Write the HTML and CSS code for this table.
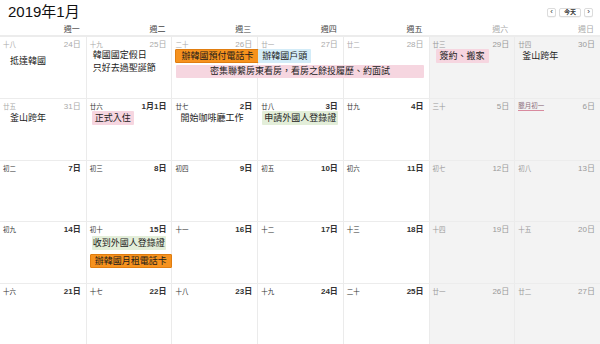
FILE: index.html
```html
<!DOCTYPE html>
<html lang="zh-Hant">
<head>
<meta charset="utf-8">
<title>2019年1月</title>
<link rel="stylesheet" href="styles.css">
</head>
<body>
<div class="cal">
  <div class="top">
    <h1 class="title">2019年1月</h1>
    <div class="nav">
      <span class="btn arrow">‹</span>
      <span class="btn today">今天</span>
      <span class="btn arrow">›</span>
    </div>
  </div>
  <div class="weekdays">
    <div class="wd">週一</div>
    <div class="wd">週二</div>
    <div class="wd">週三</div>
    <div class="wd">週四</div>
    <div class="wd">週五</div>
    <div class="wd we">週六</div>
    <div class="wd we">週日</div>
  </div>
  <div class="weeks">
    <!-- week 1 -->
    <div class="week">
      <div class="cell c1 out"><span class="lunar">十八</span><span class="date">24日</span></div>
      <div class="cell c2 out"><span class="lunar">十九</span><span class="date">25日</span></div>
      <div class="cell c3 out"><span class="lunar">二十</span><span class="date">26日</span></div>
      <div class="cell c4 out"><span class="lunar">廿一</span><span class="date">27日</span></div>
      <div class="cell c5 out"><span class="lunar">廿二</span><span class="date">28日</span></div>
      <div class="cell c6 weekend"><span class="lunar">廿三</span><span class="date">29日</span></div>
      <div class="cell c7 weekend"><span class="lunar">廿四</span><span class="date">30日</span></div>

      <div class="txt c1 l1 span2 arrive">抵達韓國</div>
      <div class="txt c2 l1 span2 holiday">韓國國定假日<br>只好去過聖誕節</div>
      <div class="slot c3 l1"><span class="ev orange ev-prepaid">辦韓國預付電話卡</span></div>
      <div class="slot c4 l1"><span class="ev blue ev-bank">辦韓國戶頭</span></div>
      <div class="slot c3to6 l2"><span class="ev pink ev-wide">密集聯繫房東看房，看房之餘投履歷、約面試</span></div>
      <div class="slot c6 l1"><span class="ev pink ev-sign">簽約、搬家</span></div>
      <div class="txt c7 l1 busan">釜山跨年</div>
    </div>
    <!-- week 2 -->
    <div class="week">
      <div class="cell c1 out"><span class="lunar">廿五</span><span class="date">31日</span></div>
      <div class="cell c2"><span class="lunar">廿六</span><span class="date">1月1日</span></div>
      <div class="cell c3"><span class="lunar">廿七</span><span class="date">2日</span></div>
      <div class="cell c4"><span class="lunar">廿八</span><span class="date">3日</span></div>
      <div class="cell c5"><span class="lunar">廿九</span><span class="date">4日</span></div>
      <div class="cell c6 weekend"><span class="lunar">三十</span><span class="date">5日</span></div>
      <div class="cell c7 weekend"><span class="lunar month">臘月初一</span><span class="date">6日</span></div>

      <div class="txt c1 l1 busan2">釜山跨年</div>
      <div class="slot c2 l1"><span class="ev pink ev-move">正式入住</span></div>
      <div class="txt c3 l1 cafe">開始咖啡廳工作</div>
      <div class="slot c4 l1"><span class="ev green ev-apply">申請外國人登錄證</span></div>
    </div>
    <!-- week 3 -->
    <div class="week">
      <div class="cell c1"><span class="lunar">初二</span><span class="date">7日</span></div>
      <div class="cell c2"><span class="lunar">初三</span><span class="date">8日</span></div>
      <div class="cell c3"><span class="lunar">初四</span><span class="date">9日</span></div>
      <div class="cell c4"><span class="lunar">初五</span><span class="date">10日</span></div>
      <div class="cell c5"><span class="lunar">初六</span><span class="date">11日</span></div>
      <div class="cell c6 weekend"><span class="lunar">初七</span><span class="date">12日</span></div>
      <div class="cell c7 weekend"><span class="lunar">初八</span><span class="date">13日</span></div>
    </div>
    <!-- week 4 -->
    <div class="week">
      <div class="cell c1"><span class="lunar">初九</span><span class="date">14日</span></div>
      <div class="cell c2"><span class="lunar">初十</span><span class="date">15日</span></div>
      <div class="cell c3"><span class="lunar">十一</span><span class="date">16日</span></div>
      <div class="cell c4"><span class="lunar">十二</span><span class="date">17日</span></div>
      <div class="cell c5"><span class="lunar">十三</span><span class="date">18日</span></div>
      <div class="cell c6 weekend"><span class="lunar">十四</span><span class="date">19日</span></div>
      <div class="cell c7 weekend"><span class="lunar">十五</span><span class="date">20日</span></div>

      <div class="slot c2 l1 low"><span class="ev green ev-recv">收到外國人登錄證</span></div>
      <div class="slot c2 l2 lower"><span class="ev orange ev-monthly">辦韓國月租電話卡</span></div>
    </div>
    <!-- week 5 -->
    <div class="week">
      <div class="cell c1"><span class="lunar">十六</span><span class="date">21日</span></div>
      <div class="cell c2"><span class="lunar">十七</span><span class="date">22日</span></div>
      <div class="cell c3"><span class="lunar">十八</span><span class="date">23日</span></div>
      <div class="cell c4"><span class="lunar">十九</span><span class="date">24日</span></div>
      <div class="cell c5"><span class="lunar">二十</span><span class="date">25日</span></div>
      <div class="cell c6 weekend"><span class="lunar">廿一</span><span class="date">26日</span></div>
      <div class="cell c7 weekend"><span class="lunar">廿二</span><span class="date">27日</span></div>
    </div>
  </div>
</div>
</body>
</html>
```

FILE: styles.css
```css
* { box-sizing: border-box; }
html, body {
  margin: 0;
  padding: 0;
  background: #fff;
}
body {
  width: 600px;
  height: 344px;
  overflow: hidden;
  font-family: "Liberation Sans", "Noto Sans CJK TC", sans-serif;
  color: #222;
}
.cal {
  display: flex;
  flex-direction: column;
  height: 344px;
}
.top {
  height: 21px;
  display: flex;
  align-items: center;
  justify-content: space-between;
  padding: 0 7px 0 8px;
}
.title {
  margin: 0;
  font-size: 15px;
  font-weight: normal;
  color: #111;
  line-height: 21px;
  padding-top: 2px;
}
.nav {
  display: flex;
  gap: 3px;
  align-items: center;
  margin-top: 3px;
}
.btn {
  height: 9px;
  border: 1px solid #dcdcdc;
  border-radius: 2px;
  background: #fff;
  font-size: 6px;
  line-height: 7px;
  text-align: center;
  color: #333;
  box-shadow: 0 0.5px 0.5px rgba(0,0,0,0.08);
}
.arrow {
  width: 9px;
  font-size: 8px;
  line-height: 6px;
}
.today {
  width: 22px;
  font-weight: bold;
}
.weekdays {
  display: grid;
  grid-template-columns: repeat(7, 1fr);
  height: 16px;
  border-bottom: 2px solid #ececec;
}
.wd {
  text-align: right;
  padding-right: 6px;
  padding-top: 4px;
  font-size: 8px;
  line-height: 10px;
  color: #444;
}
.wd.we { color: #aaa; }
.weeks {
  flex: 1;
  display: grid;
  grid-template-rows: repeat(5, 1fr);
}
.week {
  display: grid;
  grid-template-columns: repeat(7, 1fr);
  grid-template-rows: 12px 16px 16px 1fr;
  border-top: 1px solid #ececec;
  min-height: 0;
}
.week:first-child { border-top: none; }
.cell {
  grid-row: 1 / -1;
  display: flex;
  justify-content: space-between;
  align-items: flex-start;
  padding: 3px 5px 0 3px;
  border-left: 1px solid #ebebeb;
  background: #fff;
  color: #333;
}
.cell.c1 { border-left: none; }
.cell.weekend { background: #f3f3f3; color: #999; }
.cell.out { color: #aaa; }
.lunar {
  font-size: 6.5px;
  line-height: 9px;
}
.lunar.month {
  color: #8a6a78;
  border-bottom: 1px solid #d88a9e;
  line-height: 8px;
}
.date {
  font-size: 8px;
  line-height: 9px;
}
.cell:not(.out):not(.weekend) .date { font-weight: bold; color: #333; }
.c1 { grid-column: 1; }
.c2 { grid-column: 2; }
.c3 { grid-column: 3; }
.c4 { grid-column: 4; }
.c5 { grid-column: 5; }
.c6 { grid-column: 6; }
.c7 { grid-column: 7; }
.c3to6 { grid-column: 3 / 6; }
.l1 { grid-row: 2; }
.l2 { grid-row: 3; }
.span2 { grid-row: 2 / 4; }

.slot {
  display: flex;
  align-items: flex-start;
  min-width: 0;
}
.low { padding-top: 2px; }
.lower { padding-top: 4px; }
.ev {
  display: inline-block;
  height: 14px;
  line-height: 14px;
  font-size: 9px;
  padding: 0 3px;
  color: #222;
  white-space: nowrap;
  border-radius: 1px;
}
.orange {
  background: #f6921e;
  border: 1px solid #e07d10;
  line-height: 12px;
  color: #1a1a1a;
}
.blue { background: #d3ecf8; }
.pink { background: #f6d6e0; }
.green { background: #e3eed9; }

.ev-prepaid { margin-left: 4px; padding: 0 5px; }
.ev-bank { margin-left: 1px; padding: 0 4px; }
.ev-wide { margin: 0 5px; flex: 1; text-align: center; height: 13px; line-height: 13px; }
.ev-sign { margin-left: 7px; padding: 0 4px; }
.ev-move { margin-left: 6px; padding: 0 3px; }
.ev-apply { margin-left: 5px; padding: 0 2px; }
.ev-recv { margin-left: 6px; padding: 0 1px; }
.ev-monthly { margin-left: 4px; padding: 0 4px; }

.txt {
  font-size: 9px;
  line-height: 13px;
  color: #1a1a1a;
  white-space: nowrap;
}
.arrive { padding: 6px 0 0 10px; }
.holiday { padding: 0 0 0 7px; }
.busan { padding: 1px 0 0 8px; }
.busan2 { padding: 1px 0 0 10px; }
.cafe { padding: 1px 0 0 9px; }
```
